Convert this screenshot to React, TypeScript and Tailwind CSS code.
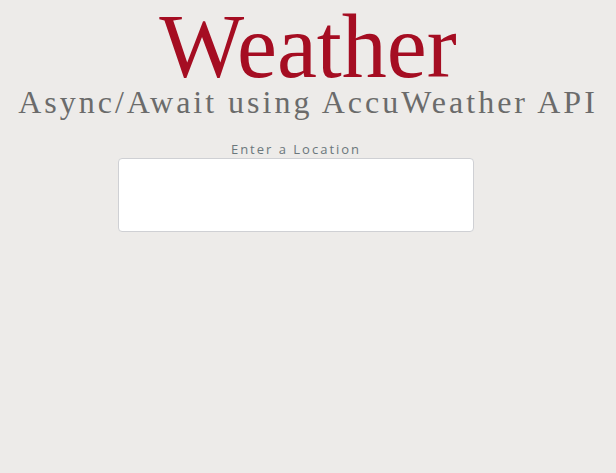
import React from 'react';

function App() {
  return (
    <div className="min-h-[473px] w-full bg-[#edebe9] flex flex-col items-center">
      {/* heading */}
      <h1 className="text-[90px] pt-[4px] leading-[86px] text-[#a50d22] font-['Georgia','Liberation_Serif',serif]">
        Weather
      </h1>
      <h2 className="text-[32px] leading-[25px] text-[#6b6b6b] tracking-[3px] font-['Georgia','Liberation_Serif',serif]">
        Async/Await using AccuWeather API
      </h2>
      {/* location form */}
      <div className="w-full mt-[28px]">
        <div className="w-[356px] ml-[118px] flex flex-col items-center">
          <label className="text-[13px] leading-none text-[#6b777c] tracking-[2px] font-['Open_Sans',sans-serif]">
            Enter a Location
          </label>
          <input
            type="text"
            className="mt-[2px] w-full h-[74px] bg-white border border-[#cfd0d4] rounded-[4px] outline-none"
          />
        </div>
      </div>
    </div>
  );
}

export default App;
